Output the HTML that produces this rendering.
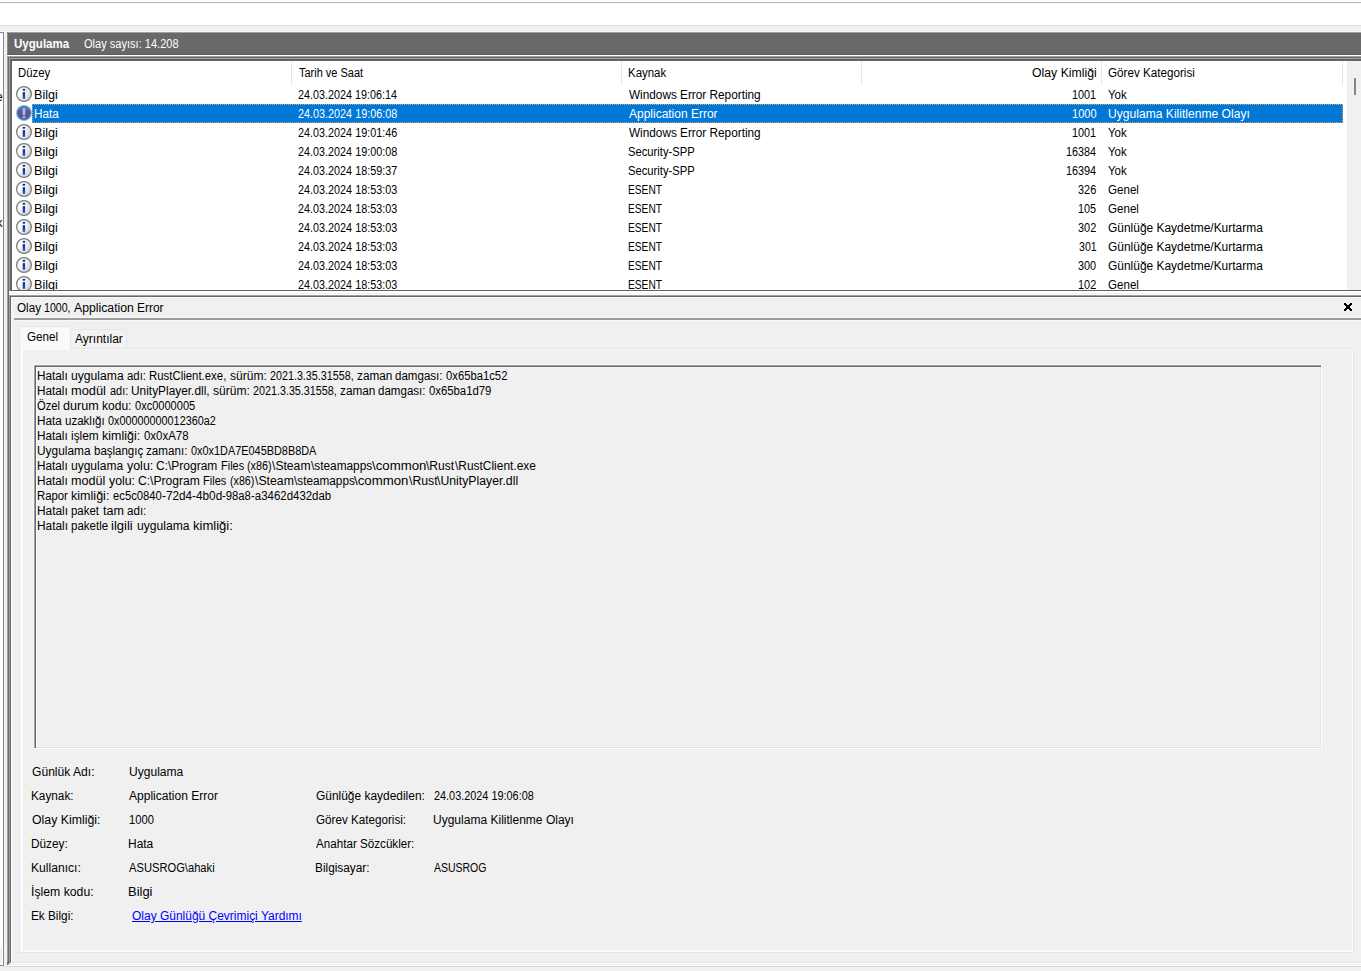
<!DOCTYPE html>
<html lang="tr">
<head>
<meta charset="utf-8">
<title>Olay Görüntüleyicisi</title>
<style>
html,body{margin:0;padding:0}
body{width:1361px;height:971px;overflow:hidden;position:relative;background:#f0f0f0;
 font-family:"Liberation Sans",sans-serif;font-size:12px;color:#000}
.r{position:absolute}
.t{position:absolute;white-space:pre;line-height:14px;font-size:12px;transform-origin:0 0}
.sep{position:absolute;top:61px;width:1px;height:24px;background:#e5e5e5}
.ic{position:absolute;left:3px;width:18px;height:18px}
</style>
</head>
<body>
<!-- top strip -->
<div class="r" style="left:0;top:0;width:1361px;height:25px;background:#fff"></div>
<div class="r" style="left:0;top:2px;width:1361px;height:1px;background:#b4b4b4"></div>
<div class="r" style="left:0;top:3px;width:1361px;height:1px;background:#f3f6fb"></div>
<div class="r" style="left:0;top:25px;width:1361px;height:1px;background:#dcdcdc"></div>
<div class="r" style="left:0;top:31px;width:1361px;height:1px;background:#f8f8f8"></div>

<!-- left tree panel sliver -->
<div class="r" style="left:0;top:32px;width:3px;height:932px;background:#fff;border-top:1px solid #828790;border-right:1px solid #828790;border-bottom:1px solid #828790"></div>
<div class="r" style="left:0;top:948px;width:2px;height:16px;background:#f0f0f0"></div>
<div class="r" style="left:0;top:86px;width:3px;height:18px;overflow:hidden"><span class="t" style="left:-4px;top:4px">e</span></div>
<div class="r" style="left:0;top:212px;width:3px;height:18px;overflow:hidden"><span class="t" style="left:-3.4px;top:4px">k</span></div>

<!-- dark caption bar -->
<div class="r" style="left:7px;top:32px;width:1354px;height:23px;background:#696969"></div>
<div class="r" style="left:7px;top:32px;width:1354px;height:1px;background:#a0a0a0"></div>
<div class="r" style="left:7px;top:32px;width:1px;height:23px;background:#8c8c8c"></div>
<div class="r" style="left:7px;top:54px;width:1354px;height:1px;background:#5c5c5c"></div>
<div class="r" style="left:7px;top:55px;width:1354px;height:1px;background:#fff"></div>

<!-- outer container edge -->
<div class="r" style="left:7px;top:56px;width:1px;height:906px;background:#a0a0a0"></div>
<div class="r" style="left:8px;top:56px;width:1px;height:906px;background:#696969"></div>
<div class="r" style="left:7px;top:56px;width:1354px;height:1px;background:#a0a0a0"></div>
<div class="r" style="left:8px;top:57px;width:1353px;height:1px;background:#696969"></div>

<!-- list view -->
<div class="r" style="left:9px;top:58px;width:1352px;height:233px;background:#a0a0a0"></div>
<div class="r" style="left:10px;top:59px;width:1351px;height:232px;background:#636363"></div>
<div class="r" id="list" style="left:12px;top:61px;width:1349px;height:229px;background:#fff;overflow:hidden">
<svg width="0" height="0" style="position:absolute"><defs><radialGradient id="gi" cx="0.3" cy="0.38" r="0.78"><stop offset="0" stop-color="#ffffff"/><stop offset="0.4" stop-color="#f6f6f6"/><stop offset="0.75" stop-color="#dcdcdc"/><stop offset="1" stop-color="#bcbcbc"/></radialGradient><linearGradient id="gb" x1="0" y1="0" x2="0" y2="1"><stop offset="0" stop-color="#0c2392"/><stop offset="1" stop-color="#2a55d0"/></linearGradient><linearGradient id="ge" x1="0" y1="0" x2="0" y2="1"><stop offset="0" stop-color="#7a6a9c"/><stop offset="0.5" stop-color="#675086"/><stop offset="1" stop-color="#6b548a"/></linearGradient></defs></svg>
<div class="r" style="left:279px;top:0;width:1px;height:24px;background:#e5e5e5"></div>
<div class="r" style="left:609px;top:0;width:1px;height:24px;background:#e5e5e5"></div>
<div class="r" style="left:849px;top:0;width:1px;height:24px;background:#e5e5e5"></div>
<div class="r" style="left:1089px;top:0;width:1px;height:24px;background:#e5e5e5"></div>
<div class="r" style="left:1330px;top:0;width:1px;height:24px;background:#e5e5e5"></div>
<div class="r" style="left:20px;top:43px;width:1311px;height:19px;background:#0078d7;box-sizing:border-box;border:1px dotted #e8a060"></div>
<div class="r" style="left:1335px;top:0;width:20px;height:229px;background:#f0f0f0"></div>
<div class="r" style="left:1342px;top:17px;width:2px;height:17px;background:#868686"></div>
<svg class="ic" style="top:24px" viewBox="0 0 18 18"><circle cx="9" cy="9" r="7.4" fill="url(#gi)" stroke="#7d7d7d" stroke-width="1.25"/><rect x="7.7" y="3.9" width="2.4" height="1.8" fill="#10248c"/><rect x="7.7" y="7.2" width="2.4" height="6.6" fill="url(#gb)"/></svg>
<svg class="ic" style="top:43px" viewBox="0 0 18 18"><circle cx="9" cy="9" r="8" fill="#8ac6f4"/><circle cx="9" cy="9" r="7.2" fill="#4088c8"/><circle cx="9" cy="9" r="6.3" fill="url(#ge)"/><rect x="7.7" y="4.1" width="2.5" height="6.9" fill="#8fd0fb"/><rect x="7.7" y="12.2" width="2.5" height="1.9" fill="#8fd0fb"/></svg>
<svg class="ic" style="top:62px" viewBox="0 0 18 18"><circle cx="9" cy="9" r="7.4" fill="url(#gi)" stroke="#7d7d7d" stroke-width="1.25"/><rect x="7.7" y="3.9" width="2.4" height="1.8" fill="#10248c"/><rect x="7.7" y="7.2" width="2.4" height="6.6" fill="url(#gb)"/></svg>
<svg class="ic" style="top:81px" viewBox="0 0 18 18"><circle cx="9" cy="9" r="7.4" fill="url(#gi)" stroke="#7d7d7d" stroke-width="1.25"/><rect x="7.7" y="3.9" width="2.4" height="1.8" fill="#10248c"/><rect x="7.7" y="7.2" width="2.4" height="6.6" fill="url(#gb)"/></svg>
<svg class="ic" style="top:100px" viewBox="0 0 18 18"><circle cx="9" cy="9" r="7.4" fill="url(#gi)" stroke="#7d7d7d" stroke-width="1.25"/><rect x="7.7" y="3.9" width="2.4" height="1.8" fill="#10248c"/><rect x="7.7" y="7.2" width="2.4" height="6.6" fill="url(#gb)"/></svg>
<svg class="ic" style="top:119px" viewBox="0 0 18 18"><circle cx="9" cy="9" r="7.4" fill="url(#gi)" stroke="#7d7d7d" stroke-width="1.25"/><rect x="7.7" y="3.9" width="2.4" height="1.8" fill="#10248c"/><rect x="7.7" y="7.2" width="2.4" height="6.6" fill="url(#gb)"/></svg>
<svg class="ic" style="top:138px" viewBox="0 0 18 18"><circle cx="9" cy="9" r="7.4" fill="url(#gi)" stroke="#7d7d7d" stroke-width="1.25"/><rect x="7.7" y="3.9" width="2.4" height="1.8" fill="#10248c"/><rect x="7.7" y="7.2" width="2.4" height="6.6" fill="url(#gb)"/></svg>
<svg class="ic" style="top:157px" viewBox="0 0 18 18"><circle cx="9" cy="9" r="7.4" fill="url(#gi)" stroke="#7d7d7d" stroke-width="1.25"/><rect x="7.7" y="3.9" width="2.4" height="1.8" fill="#10248c"/><rect x="7.7" y="7.2" width="2.4" height="6.6" fill="url(#gb)"/></svg>
<svg class="ic" style="top:176px" viewBox="0 0 18 18"><circle cx="9" cy="9" r="7.4" fill="url(#gi)" stroke="#7d7d7d" stroke-width="1.25"/><rect x="7.7" y="3.9" width="2.4" height="1.8" fill="#10248c"/><rect x="7.7" y="7.2" width="2.4" height="6.6" fill="url(#gb)"/></svg>
<svg class="ic" style="top:195px" viewBox="0 0 18 18"><circle cx="9" cy="9" r="7.4" fill="url(#gi)" stroke="#7d7d7d" stroke-width="1.25"/><rect x="7.7" y="3.9" width="2.4" height="1.8" fill="#10248c"/><rect x="7.7" y="7.2" width="2.4" height="6.6" fill="url(#gb)"/></svg>
<svg class="ic" style="top:214px" viewBox="0 0 18 18"><circle cx="9" cy="9" r="7.4" fill="url(#gi)" stroke="#7d7d7d" stroke-width="1.25"/><rect x="7.7" y="3.9" width="2.4" height="1.8" fill="#10248c"/><rect x="7.7" y="7.2" width="2.4" height="6.6" fill="url(#gb)"/></svg>
<span class="t" style="left:5.81px;top:5.0px;transform:scaleX(0.9463)">Düzey</span>
<span class="t" style="left:286.63px;top:5.0px;transform:scaleX(0.9143)">Tarih ve Saat</span>
<span class="t" style="left:615.60px;top:5.0px;transform:scaleX(0.9548)">Kaynak</span>
<span class="t" style="left:1019.82px;top:5.0px;transform:scaleX(1.0227)">Olay Kimliği</span>
<span class="t" style="left:1095.75px;top:5.0px;transform:scaleX(0.9714)">Görev Kategorisi</span>
<span class="t" style="left:22.02px;top:26.6px;transform:scaleX(1.0503)">Bilgi</span>
<span class="t" style="left:285.99px;top:26.6px;transform:scaleX(0.8998)">24.03.2024 19:06:14</span>
<span class="t" style="left:616.50px;top:26.6px;transform:scaleX(0.9822)">Windows Error Reporting</span>
<span class="t" style="left:1060.12px;top:26.6px;transform:scaleX(0.9034)">1001</span>
<span class="t" style="left:1096.12px;top:26.6px;transform:scaleX(0.9552)">Yok</span>
<span class="t" style="left:22.08px;top:45.6px;transform:scaleX(0.9801);color:#fff">Hata</span>
<span class="t" style="left:285.99px;top:45.6px;transform:scaleX(0.9014);color:#fff">24.03.2024 19:06:08</span>
<span class="t" style="left:616.50px;top:45.6px;transform:scaleX(0.9983);color:#fff">Application Error</span>
<span class="t" style="left:1059.51px;top:45.6px;transform:scaleX(0.9202);color:#fff">1000</span>
<span class="t" style="left:1095.54px;top:45.6px;transform:scaleX(1.0080);color:#fff">Uygulama Kilitlenme Olayı</span>
<span class="t" style="left:22.02px;top:64.6px;transform:scaleX(1.0503)">Bilgi</span>
<span class="t" style="left:285.99px;top:64.6px;transform:scaleX(0.9014)">24.03.2024 19:01:46</span>
<span class="t" style="left:616.50px;top:64.6px;transform:scaleX(0.9822)">Windows Error Reporting</span>
<span class="t" style="left:1060.12px;top:64.6px;transform:scaleX(0.9034)">1001</span>
<span class="t" style="left:1096.12px;top:64.6px;transform:scaleX(0.9552)">Yok</span>
<span class="t" style="left:22.02px;top:83.6px;transform:scaleX(1.0503)">Bilgi</span>
<span class="t" style="left:285.99px;top:83.6px;transform:scaleX(0.9014)">24.03.2024 19:00:08</span>
<span class="t" style="left:616.15px;top:83.6px;transform:scaleX(0.9365)">Security-SPP</span>
<span class="t" style="left:1053.92px;top:83.6px;transform:scaleX(0.9035)">16384</span>
<span class="t" style="left:1096.12px;top:83.6px;transform:scaleX(0.9552)">Yok</span>
<span class="t" style="left:22.02px;top:102.6px;transform:scaleX(1.0503)">Bilgi</span>
<span class="t" style="left:285.99px;top:102.6px;transform:scaleX(0.9014)">24.03.2024 18:59:37</span>
<span class="t" style="left:616.15px;top:102.6px;transform:scaleX(0.9365)">Security-SPP</span>
<span class="t" style="left:1053.92px;top:102.6px;transform:scaleX(0.9035)">16394</span>
<span class="t" style="left:1096.12px;top:102.6px;transform:scaleX(0.9552)">Yok</span>
<span class="t" style="left:22.02px;top:121.6px;transform:scaleX(1.0503)">Bilgi</span>
<span class="t" style="left:285.99px;top:121.6px;transform:scaleX(0.9014)">24.03.2024 18:53:03</span>
<span class="t" style="left:615.70px;top:121.6px;transform:scaleX(0.8491)">ESENT</span>
<span class="t" style="left:1065.96px;top:121.6px;transform:scaleX(0.9134)">326</span>
<span class="t" style="left:1095.76px;top:121.6px;transform:scaleX(0.9652)">Genel</span>
<span class="t" style="left:22.02px;top:140.6px;transform:scaleX(1.0503)">Bilgi</span>
<span class="t" style="left:285.99px;top:140.6px;transform:scaleX(0.9014)">24.03.2024 18:53:03</span>
<span class="t" style="left:615.70px;top:140.6px;transform:scaleX(0.8491)">ESENT</span>
<span class="t" style="left:1066.12px;top:140.6px;transform:scaleX(0.9050)">105</span>
<span class="t" style="left:1095.76px;top:140.6px;transform:scaleX(0.9652)">Genel</span>
<span class="t" style="left:22.02px;top:159.6px;transform:scaleX(1.0503)">Bilgi</span>
<span class="t" style="left:285.99px;top:159.6px;transform:scaleX(0.9014)">24.03.2024 18:53:03</span>
<span class="t" style="left:615.70px;top:159.6px;transform:scaleX(0.8491)">ESENT</span>
<span class="t" style="left:1065.96px;top:159.6px;transform:scaleX(0.9134)">302</span>
<span class="t" style="left:1095.74px;top:159.6px;transform:scaleX(0.9959)">Günlüğe Kaydetme/Kurtarma</span>
<span class="t" style="left:22.02px;top:178.6px;transform:scaleX(1.0503)">Bilgi</span>
<span class="t" style="left:285.99px;top:178.6px;transform:scaleX(0.9014)">24.03.2024 18:53:03</span>
<span class="t" style="left:615.70px;top:178.6px;transform:scaleX(0.8491)">ESENT</span>
<span class="t" style="left:1066.57px;top:178.6px;transform:scaleX(0.8820)">301</span>
<span class="t" style="left:1095.74px;top:178.6px;transform:scaleX(0.9959)">Günlüğe Kaydetme/Kurtarma</span>
<span class="t" style="left:22.02px;top:197.6px;transform:scaleX(1.0503)">Bilgi</span>
<span class="t" style="left:285.99px;top:197.6px;transform:scaleX(0.9014)">24.03.2024 18:53:03</span>
<span class="t" style="left:615.70px;top:197.6px;transform:scaleX(0.8491)">ESENT</span>
<span class="t" style="left:1065.96px;top:197.6px;transform:scaleX(0.9045)">300</span>
<span class="t" style="left:1095.74px;top:197.6px;transform:scaleX(0.9959)">Günlüğe Kaydetme/Kurtarma</span>
<span class="t" style="left:22.02px;top:216.6px;transform:scaleX(1.0503)">Bilgi</span>
<span class="t" style="left:285.99px;top:216.6px;transform:scaleX(0.9014)">24.03.2024 18:53:03</span>
<span class="t" style="left:615.70px;top:216.6px;transform:scaleX(0.8491)">ESENT</span>
<span class="t" style="left:1066.02px;top:216.6px;transform:scaleX(0.9103)">102</span>
<span class="t" style="left:1095.76px;top:216.6px;transform:scaleX(0.9652)">Genel</span>
</div>
<div class="r" style="left:9px;top:291px;width:1352px;height:4px;background:#fff"></div>
<div class="r" style="left:9px;top:293px;width:1352px;height:1px;background:#f1f1f1"></div>

<!-- detail pane frame -->
<div class="r" style="left:9px;top:295px;width:1352px;height:667px;background:#a0a0a0"></div>
<div class="r" style="left:10px;top:296px;width:1351px;height:666px;background:#696969"></div>
<div class="r" style="left:11px;top:297px;width:1350px;height:665px;background:#fafafa"></div>
<div class="r" style="left:12px;top:298px;width:1349px;height:664px;background:#f0f0f0"></div>
<!-- pane bottom edge -->
<div class="r" style="left:7px;top:962px;width:1354px;height:1px;background:#e3e3e3"></div>
<div class="r" style="left:7px;top:963px;width:1354px;height:1px;background:#fff"></div>
<div class="r" style="left:5px;top:964px;width:1356px;height:1px;background:#e9e9e9"></div>
<div class="r" style="left:4px;top:965px;width:1357px;height:1px;background:#fff"></div>
<div class="r" style="left:4px;top:966px;width:1357px;height:1px;background:#d9d9d9"></div>

<svg class="r" style="left:7px;top:962px" width="5" height="5" viewBox="0 0 5 5"><path d="M0 0H4L0 3.6Z" fill="#6e6e6e"/></svg>
<!-- pane title underline + close -->
<div class="r" style="left:13px;top:317px;width:1348px;height:4px;background:#f7f7f7"></div>
<div class="r" style="left:14px;top:318px;width:1347px;height:2px;background:#9c9c9c"></div>
<svg class="r" style="left:1344px;top:303px" width="8" height="8" viewBox="0 0 8 8" shape-rendering="crispEdges"><path fill="#000" d="M0 0h2v1h-2z M6 0h2v1h-2z M0 1h3v1h-3z M5 1h3v1h-3z M1 2h6v1h-6z M2 3h4v2h-4z M1 5h6v1h-6z M0 6h3v1h-3z M5 6h3v1h-3z M0 7h2v1h-2z M6 7h2v1h-2z"/></svg>

<!-- tab control -->
<div class="r" style="left:19px;top:348px;width:1335px;height:605px;background:#e5e5e5"></div>
<div class="r" style="left:20px;top:349px;width:1333px;height:603px;background:#fafafa"></div>
<div class="r" style="left:23px;top:350px;width:1329px;height:600px;background:#f0f0f0"></div>
<div class="r" style="left:70px;top:329px;width:57px;height:19px;background:#f2f2f2;border:1px solid #e6e6e6;border-bottom:none;box-sizing:border-box"></div>
<div class="r" style="left:19px;top:326px;width:52px;height:24px;background:#fafafa;border:1px solid #e6e6e6;border-bottom:none;box-sizing:border-box"></div>

<!-- read-only text box -->
<div class="r" style="left:33px;top:364px;width:1288px;height:384px;background:#f8f8f8"></div>
<div class="r" style="left:34px;top:365px;width:1288px;height:384px;background:#fff"></div>
<div class="r" style="left:34px;top:365px;width:1287px;height:383px;background:#a0a0a0"></div>
<div class="r" style="left:35px;top:366px;width:1286px;height:382px;background:#696969"></div>
<div class="r" style="left:36px;top:367px;width:1285px;height:381px;background:#e3e3e3"></div>
<div class="r" style="left:36px;top:367px;width:1284px;height:380px;background:#fbfbfb"></div>
<div class="r" style="left:37px;top:368px;width:1283px;height:379px;background:#f0f0f0"></div>

<span class="t" style="left:13.76px;top:37.0px;transform:scaleX(0.9637);font-weight:bold;color:#fff">Uygulama</span>
<span class="t" style="left:83.98px;top:37.0px;transform:scaleX(0.9206);color:#fff">Olay sayısı: 14.208</span>
<div><span class="t" style="left:16.95px;top:301.0px;transform:scaleX(0.9747)">Olay </span><span class="t" style="left:44.14px;top:301.0px;transform:scaleX(0.8812)">1000, </span><span class="t" style="left:74.20px;top:301.0px;transform:scaleX(1.0203)">Application </span><span class="t" style="left:136.57px;top:301.0px;transform:scaleX(0.9934)">Error</span></div>
<span class="t" style="left:26.76px;top:330.0px;transform:scaleX(0.9684)">Genel</span>
<span class="t" style="left:75.20px;top:332.0px;transform:scaleX(1.0013)">Ayrıntılar</span>
<div><span class="t" style="left:36.68px;top:368.6px;transform:scaleX(0.9803)">Hatalı </span><span class="t" style="left:70.84px;top:368.6px;transform:scaleX(1.0133)">uygulama </span><span class="t" style="left:127.35px;top:368.6px;transform:scaleX(0.9465)">adı: </span><span class="t" style="left:148.91px;top:368.6px;transform:scaleX(0.9504)">RustClient.exe, </span><span class="t" style="left:230.11px;top:368.6px;transform:scaleX(1.0023)">sürüm: </span><span class="t" style="left:269.90px;top:368.6px;transform:scaleX(0.8950)">2021.3.35.31558, </span><span class="t" style="left:356.63px;top:368.6px;transform:scaleX(0.9834)">zaman </span><span class="t" style="left:395.34px;top:368.6px;transform:scaleX(0.9622)">damgası: </span><span class="t" style="left:446.05px;top:368.6px;transform:scaleX(0.9391)">0x65ba1c52</span></div>
<div><span class="t" style="left:36.68px;top:383.6px;transform:scaleX(0.9803)">Hatalı </span><span class="t" style="left:70.80px;top:383.6px;transform:scaleX(1.0689)">modül </span><span class="t" style="left:109.76px;top:383.6px;transform:scaleX(0.9122)">adı: </span><span class="t" style="left:130.66px;top:383.6px;transform:scaleX(0.9903)">UnityPlayer.dll, </span><span class="t" style="left:213.11px;top:383.6px;transform:scaleX(1.0048)">sürüm: </span><span class="t" style="left:253.00px;top:383.6px;transform:scaleX(0.8961)">2021.3.35.31558, </span><span class="t" style="left:339.83px;top:383.6px;transform:scaleX(0.9809)">zaman </span><span class="t" style="left:378.44px;top:383.6px;transform:scaleX(0.9622)">damgası: </span><span class="t" style="left:429.15px;top:383.6px;transform:scaleX(0.9432)">0x65ba1d79</span></div>
<div><span class="t" style="left:36.88px;top:398.6px;transform:scaleX(0.9319)">Özel </span><span class="t" style="left:63.11px;top:398.6px;transform:scaleX(1.0496)">durum </span><span class="t" style="left:101.95px;top:398.6px;transform:scaleX(1.0034)">kodu: </span><span class="t" style="left:135.15px;top:398.6px;transform:scaleX(0.9205)">0xc0000005</span></div>
<div><span class="t" style="left:36.68px;top:413.6px;transform:scaleX(0.9797)">Hata </span><span class="t" style="left:64.98px;top:413.6px;transform:scaleX(0.9600)">uzaklığı </span><span class="t" style="left:108.26px;top:413.6px;transform:scaleX(0.9022)">0x00000000012360a2</span></div>
<div><span class="t" style="left:36.68px;top:428.6px;transform:scaleX(0.9803)">Hatalı </span><span class="t" style="left:70.86px;top:428.6px;transform:scaleX(0.9925)">işlem </span><span class="t" style="left:101.92px;top:428.6px;transform:scaleX(1.0399)">kimliği: </span><span class="t" style="left:143.94px;top:428.6px;transform:scaleX(0.9534)">0x0xA78</span></div>
<div><span class="t" style="left:36.86px;top:443.6px;transform:scaleX(0.9903)">Uygulama </span><span class="t" style="left:93.68px;top:443.6px;transform:scaleX(0.9579)">başlangıç </span><span class="t" style="left:146.44px;top:443.6px;transform:scaleX(0.9713)">zamanı: </span><span class="t" style="left:191.16px;top:443.6px;transform:scaleX(0.9081)">0x0x1DA7E045BD8B8DA</span></div>
<div><span class="t" style="left:36.68px;top:458.6px;transform:scaleX(0.9803)">Hatalı </span><span class="t" style="left:70.85px;top:458.6px;transform:scaleX(1.0006)">uygulama </span><span class="t" style="left:127.00px;top:458.6px;transform:scaleX(1.0355)">yolu: </span><span class="t" style="left:156.14px;top:458.6px;transform:scaleX(1.0003)">C:\Program </span><span class="t" style="left:220.54px;top:458.6px;transform:scaleX(0.9138)">Files </span><span class="t" style="left:247.09px;top:458.6px;transform:scaleX(0.9034)">(x86)</span><span class="t" style="left:272.30px;top:458.6px;transform:scaleX(1.0127)">\Steam</span><span class="t" style="left:310.80px;top:458.6px;transform:scaleX(0.9866)">\steamapps</span><span class="t" style="left:372.00px;top:458.6px;transform:scaleX(1.1024)">\common</span><span class="t" style="left:426.40px;top:458.6px;transform:scaleX(1.0069)">\Rust</span><span class="t" style="left:454.60px;top:458.6px;transform:scaleX(0.9940)">\RustClient.exe</span></div>
<div><span class="t" style="left:36.68px;top:473.6px;transform:scaleX(0.9803)">Hatalı </span><span class="t" style="left:70.81px;top:473.6px;transform:scaleX(1.0495)">modül </span><span class="t" style="left:109.40px;top:473.6px;transform:scaleX(1.0216)">yolu: </span><span class="t" style="left:138.13px;top:473.6px;transform:scaleX(1.0096)">C:\Program </span><span class="t" style="left:203.14px;top:473.6px;transform:scaleX(0.9208)">Files </span><span class="t" style="left:229.90px;top:473.6px;transform:scaleX(0.8888)">(x86)</span><span class="t" style="left:254.70px;top:473.6px;transform:scaleX(1.0233)">\Steam</span><span class="t" style="left:293.60px;top:473.6px;transform:scaleX(0.9801)">\steamapps</span><span class="t" style="left:354.40px;top:473.6px;transform:scaleX(1.1024)">\common</span><span class="t" style="left:408.80px;top:473.6px;transform:scaleX(1.0211)">\Rust</span><span class="t" style="left:437.40px;top:473.6px;transform:scaleX(1.0220)">\UnityPlayer.dll</span></div>
<div><span class="t" style="left:36.72px;top:488.6px;transform:scaleX(0.9440)">Rapor </span><span class="t" style="left:70.81px;top:488.6px;transform:scaleX(1.0474)">kimliği: </span><span class="t" style="left:113.15px;top:488.6px;transform:scaleX(0.9377)">ec5c0840</span><span class="t" style="left:161.93px;top:488.6px;transform:scaleX(0.9807)">-72d4</span><span class="t" style="left:192.03px;top:488.6px;transform:scaleX(0.9840)">-4b0d</span><span class="t" style="left:222.25px;top:488.6px;transform:scaleX(0.9384)">-98a8</span><span class="t" style="left:251.04px;top:488.6px;transform:scaleX(0.9541)">-a3462d432dab</span></div>
<div><span class="t" style="left:36.67px;top:503.6px;transform:scaleX(0.9890)">Hatalı </span><span class="t" style="left:71.19px;top:503.6px;transform:scaleX(0.9514)">paket </span><span class="t" style="left:103.00px;top:503.6px;transform:scaleX(1.0455)">tam </span><span class="t" style="left:127.04px;top:503.6px;transform:scaleX(0.9646)">adı:</span></div>
<div><span class="t" style="left:36.67px;top:518.6px;transform:scaleX(0.9890)">Hatalı </span><span class="t" style="left:71.18px;top:518.6px;transform:scaleX(0.9612)">paketle </span><span class="t" style="left:111.48px;top:518.6px;transform:scaleX(1.0884)">ilgili </span><span class="t" style="left:136.94px;top:518.6px;transform:scaleX(1.0079)">uygulama </span><span class="t" style="left:192.68px;top:518.6px;transform:scaleX(1.0880)">kimliği:</span></div>
<span class="t" style="left:31.63px;top:765.0px;transform:scaleX(1.0081)">Günlük Adı:</span>
<span class="t" style="left:128.65px;top:765.0px;transform:scaleX(1.0047)">Uygulama</span>
<span class="t" style="left:31.28px;top:789.0px;transform:scaleX(0.9809)">Kaynak:</span>
<span class="t" style="left:129.40px;top:789.0px;transform:scaleX(1.0029)">Application Error</span>
<span class="t" style="left:31.62px;top:813.0px;transform:scaleX(1.0272)">Olay Kimliği:</span>
<span class="t" style="left:128.70px;top:813.0px;transform:scaleX(0.9319)">1000</span>
<span class="t" style="left:31.28px;top:837.0px;transform:scaleX(0.9851)">Düzey:</span>
<span class="t" style="left:128.47px;top:837.0px;transform:scaleX(0.9965)">Hata</span>
<span class="t" style="left:31.25px;top:861.0px;transform:scaleX(1.0098)">Kullanıcı:</span>
<span class="t" style="left:129.40px;top:861.0px;transform:scaleX(0.9305)">ASUSROG\ahaki</span>
<span class="t" style="left:31.24px;top:885.0px;transform:scaleX(1.0204)">İşlem kodu:</span>
<span class="t" style="left:128.39px;top:885.0px;transform:scaleX(1.0789)">Bilgi</span>
<span class="t" style="left:31.28px;top:909.0px;transform:scaleX(0.9812)">Ek Bilgi:</span>
<span class="t" style="left:131.94px;top:909.0px;transform:scaleX(0.9979);color:#0000ff;text-decoration:underline">Olay Günlüğü Çevrimiçi Yardımı</span>
<span class="t" style="left:315.64px;top:789.0px;transform:scaleX(0.9948)">Günlüğe kaydedilen:</span>
<span class="t" style="left:433.69px;top:789.0px;transform:scaleX(0.9060)">24.03.2024 19:06:08</span>
<span class="t" style="left:315.65px;top:813.0px;transform:scaleX(0.9719)">Görev Kategorisi:</span>
<span class="t" style="left:433.45px;top:813.0px;transform:scaleX(1.0015)">Uygulama Kilitlenme Olayı</span>
<span class="t" style="left:316.20px;top:837.0px;transform:scaleX(0.9701)">Anahtar Sözcükler:</span>
<span class="t" style="left:315.28px;top:861.0px;transform:scaleX(0.9863)">Bilgisayar:</span>
<span class="t" style="left:434.20px;top:861.0px;transform:scaleX(0.8729)">ASUSROG</span>
</body>
</html>
